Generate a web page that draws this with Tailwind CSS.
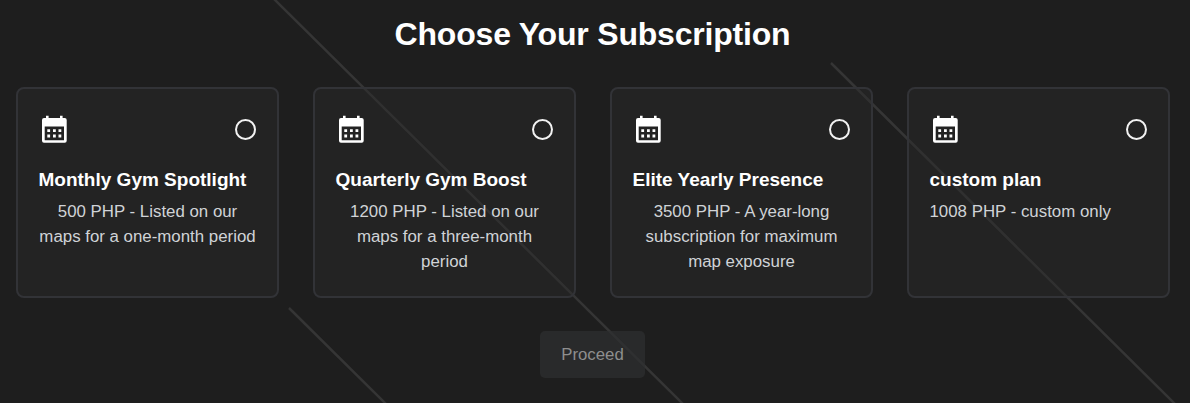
<!DOCTYPE html>
<html lang="en">
<head>
<meta charset="utf-8">
<title>Choose Your Subscription</title>
<script src="https://cdn.jsdelivr.net/npm/@tailwindcss/browser@4"></script>
</head>
<body class="relative isolate h-[403px] overflow-hidden bg-[#1e1e1e] font-['Liberation_Sans',Arial,sans-serif] text-white">
<svg class="hidden">
  <symbol id="calendar" viewBox="0 0 26 28">
    <path fill="currentColor" fill-rule="evenodd" d="M4 .700h2.600v2.300h11.400V.700h2.600v2.300h2.100a2 2 0 0 1 2 2v20.800a2 2 0 0 1-2 2H2a2 2 0 0 1-2-2V5a2 2 0 0 1 2-2h2zM2.700 11.500v13.800h19.300V11.500z"/>
    <path fill="currentColor" d="M5.300 14.300h2.800v2.800h-2.800zM11 14.300h2.800v2.800h-2.800zM16.500 14.300h2.800v2.800h-2.800zM5.300 19.600h2.800v2.800h-2.800zM11 19.600h2.800v2.800h-2.800zM16.500 19.600h2.800v2.800h-2.800z"/>
  </symbol>
</svg>
<main class="flex flex-col items-center">
  <h1 class="mt-[14px] ml-[-5px] h-10 whitespace-nowrap text-[32px] leading-10 font-bold tracking-[-0.2px]">Choose Your Subscription</h1>
  <section class="mt-[33px] grid w-full grid-cols-[repeat(4,263px)] gap-[34px] pl-4">
    <article class="flex h-[211px] flex-col items-start rounded-lg border-2 border-[#323337] bg-[#2b2b2b]/40 px-[20.500px] pt-[26px]">
      <div class="flex w-full items-start justify-between"><svg class="ml-[3px] h-7 w-[26px]"><use href="#calendar"/></svg><span class="mt-1 mr-px size-[21px] rounded-full border-2 border-[#f2f2f2]"></span></div>
      <h2 class="mt-[24px] text-[19px] leading-[26px] font-bold whitespace-nowrap">Monthly Gym Spotlight</h2>
      <p class="mt-[6px] w-full text-center text-[16.850px] leading-[25px] whitespace-nowrap text-[#d0d3d7]">500 PHP - Listed on our<br>maps for a one-month period</p>
    </article>
    <article class="flex h-[211px] flex-col items-start rounded-lg border-2 border-[#323337] bg-[#2b2b2b]/40 px-[20.500px] pt-[26px]">
      <div class="flex w-full items-start justify-between"><svg class="ml-[3px] h-7 w-[26px]"><use href="#calendar"/></svg><span class="mt-1 mr-px size-[21px] rounded-full border-2 border-[#f2f2f2]"></span></div>
      <h2 class="mt-[24px] text-[19px] leading-[26px] font-bold whitespace-nowrap">Quarterly Gym Boost</h2>
      <p class="mt-[6px] w-full text-center text-[16.850px] leading-[25px] whitespace-nowrap text-[#d0d3d7]">1200 PHP - Listed on our<br>maps for a three-month<br>period</p>
    </article>
    <article class="flex h-[211px] flex-col items-start rounded-lg border-2 border-[#323337] bg-[#2b2b2b]/40 px-[20.500px] pt-[26px]">
      <div class="flex w-full items-start justify-between"><svg class="ml-[3px] h-7 w-[26px]"><use href="#calendar"/></svg><span class="mt-1 mr-px size-[21px] rounded-full border-2 border-[#f2f2f2]"></span></div>
      <h2 class="mt-[24px] text-[19px] leading-[26px] font-bold whitespace-nowrap">Elite Yearly Presence</h2>
      <p class="mt-[6px] w-full text-center text-[16.850px] leading-[25px] whitespace-nowrap text-[#d0d3d7]">3500 PHP - A year-long<br>subscription for maximum<br>map exposure</p>
    </article>
    <article class="flex h-[211px] flex-col items-start rounded-lg border-2 border-[#323337] bg-[#2b2b2b]/40 px-[20.500px] pt-[26px]">
      <div class="flex w-full items-start justify-between"><svg class="ml-[3px] h-7 w-[26px]"><use href="#calendar"/></svg><span class="mt-1 mr-px size-[21px] rounded-full border-2 border-[#f2f2f2]"></span></div>
      <h2 class="mt-[24px] text-[19px] leading-[26px] font-bold whitespace-nowrap">custom plan</h2>
      <p class="mt-[6px] text-[16.850px] leading-[25px] whitespace-nowrap text-[#d0d3d7]">1008 PHP - custom only</p>
    </article>
  </section>
  <button disabled class="mt-[33px] ml-[-5px] h-[47px] w-[105px] rounded-[5px] bg-[#2d2f31]/70 text-[16.800px] text-[#8e8e8e]">Proceed</button>
</main>
<svg class="pointer-events-none absolute inset-0 -z-10 h-[403px] w-[1190px]" fill="none" stroke="#353535" stroke-width="2.500">
  <path d="M274 -1L683 404M289 308L386 404M831 63L1175 404"/>
</svg>
</body>
</html>
